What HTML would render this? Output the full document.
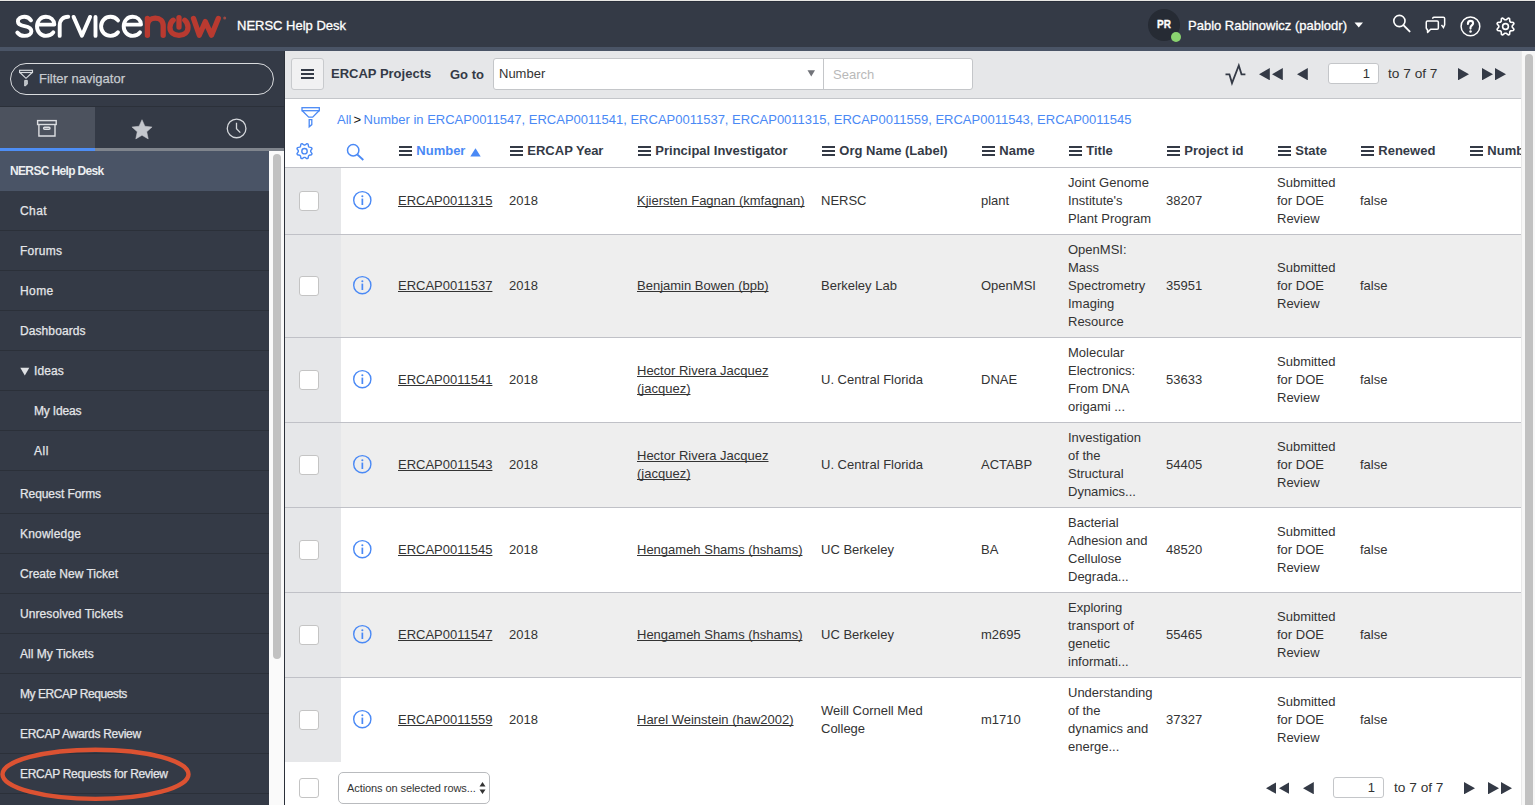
<!DOCTYPE html>
<html><head><meta charset="utf-8"><style>
*{box-sizing:border-box;margin:0;padding:0}
html,body{width:1535px;height:805px;overflow:hidden;background:#343a46;font-family:"Liberation Sans",sans-serif;}
.a{position:absolute}
.t{position:absolute;white-space:nowrap}
.navrow{position:absolute;left:0;width:269px;border-bottom:1px solid #2b3039;color:#e4e6e9;font-size:12px}
.navrow span{position:absolute;white-space:nowrap;line-height:14px;-webkit-text-stroke:0.25px #e4e6e9}
.row{position:absolute;left:0;width:1236px}
.cell{position:absolute;top:0;height:100%;display:flex;align-items:center;font-size:13px;line-height:18px;color:#333333;white-space:nowrap}
.u{text-decoration:underline;text-decoration-skip-ink:none}
.ck{position:absolute;width:20px;height:20px;border:1px solid #c4c4c4;border-radius:3px;background:#fff}
.hd{position:absolute;top:0;height:100%;display:flex;align-items:center;font-size:13px;font-weight:bold;color:#343a46;white-space:nowrap}
.hd i{display:inline-block;flex:none;width:13px;height:10px;margin-right:4.3px;position:relative;top:0.5px;background:linear-gradient(#343a46 0 2px,transparent 2px 4px,#343a46 4px 6px,transparent 6px 8px,#343a46 8px 10px)}
</style></head><body>
<div class="a" style="left:0;top:0;width:1535px;height:1px;background:#e8e7e4"></div>
<div class="a" style="left:0;top:1px;width:1535px;height:46px;background:#343a46"></div>
<div class="a" style="left:0;top:1px;width:1535px;height:1px;background:#292e3a"></div>
<div class="a" style="left:0;top:47px;width:1535px;height:4px;background:#4a5466"></div>
<svg class="a" style="left:0;top:0" width="232" height="47" viewBox="0 0 232 47">
<g fill="none" stroke="#fff" stroke-width="3.9" stroke-linecap="round" stroke-linejoin="round">
<path d="M31 20.3 C29.4 18 27.2 16.8 24.4 16.8 C20.6 16.8 17.9 18.7 17.9 21.5 C17.9 24.6 21 25.5 24.5 26.2 C28.4 27 31.4 28.3 31.4 31.3 C31.4 34.2 28.5 35.9 24.5 35.9 C21.4 35.9 18.9 34.7 17.3 32.5"/>
<path d="M37.1 24.6 H54.3 C54.1 19.8 50.6 16.8 45.9 16.8 C40.9 16.8 37 20.8 37 26.3 C37 31.8 40.9 35.9 45.9 35.9 C49.2 35.9 51.6 34.6 53.3 32.3"/>
<path d="M59.7 35.9 V25.5 C59.7 20 63 16.8 68.2 16.8"/>
<path d="M73.6 16.9 L81.9 35.8 L90.1 16.9"/>
<path d="M95.5 16.9 V35.9"/>
<path d="M118 20.4 C116.2 18.1 113.6 16.8 110.5 16.8 C105.1 16.8 101.1 20.9 101.1 26.3 C101.1 31.8 105.1 35.9 110.5 35.9 C113.6 35.9 116.2 34.6 118 32.3"/>
<path d="M123.8 24.6 H141 C140.8 19.8 137.3 16.8 132.6 16.8 C127.6 16.8 123.7 20.8 123.7 26.3 C123.7 31.8 127.6 35.9 132.6 35.9 C135.9 35.9 138.3 34.6 140 32.3"/>
</g>
<g fill="none" stroke="#b93a30" stroke-width="5.3" stroke-linecap="round" stroke-linejoin="round">
<path d="M147.4 35.3 V18.3 M147.4 26 C147.4 21 150.6 18.1 155.3 18.1 C160 18.1 163.2 21 163.2 26 V35.3"/>
<path d="M173.2 20.2 C170.9 22 169.9 24.5 169.9 27.3 C169.9 32.3 173.9 35.4 179 35.4 C184.1 35.4 188 32.3 188 27.3 C188 24.5 187 22 184.8 20.2"/>
<path d="M179 17.6 V27"/>
<path d="M193.5 18.4 L199.3 35.2 L205.3 21.6 L211.5 35.2 L218.3 18.4"/>
</g>
<circle cx="224.7" cy="17.9" r="1.5" fill="#9a4a44"/>
</svg>
<div class="t" style="left:237px;top:18px;font-size:13px;line-height:16px;color:#fff;-webkit-text-stroke:0.3px #fff">NERSC Help Desk</div>
<div class="a" style="left:1148px;top:9px;width:32px;height:32px;border-radius:50%;background:#262b34"></div>
<div class="t" style="left:1148px;top:19px;width:32px;text-align:center;font-size:10px;font-weight:bold;color:#fff;line-height:12px;-webkit-text-stroke:0.3px #fff">PR</div>
<div class="a" style="left:1171px;top:32px;width:10px;height:10px;border-radius:50%;background:#8ad36f"></div>
<div class="t" style="left:1188px;top:18px;font-size:13px;line-height:16px;color:#fff;-webkit-text-stroke:0.3px #fff">Pablo Rabinowicz (pablodr)</div>
<svg class="a" style="left:1354px;top:22px" width="10" height="6"><path d="M0.5 0.5 H9 L4.75 5.5Z" fill="#fff"/></svg>
<svg class="a" style="left:1385px;top:8px" width="30" height="30" viewBox="0 0 30 30" fill="none" stroke="#fff" stroke-width="1.6">
<circle cx="14.4" cy="13" r="5.6"/><path d="M18.4 17.2 L24.6 23.4" stroke-width="1.9" stroke-linecap="round"/></svg>
<svg class="a" style="left:1420px;top:10px" width="65" height="30" viewBox="0 0 65 30" fill="none" stroke="#fff" stroke-width="1.5">
<path d="M12.7 8.8 V8.4 Q12.7 7.15 13.9 7.15 H23.4 Q24.65 7.15 24.65 8.4 V14.9 L23.4 17.6 L21.5 14.9"/>
<path d="M7.5 10.95 H17.1 Q18.35 10.95 18.35 12.2 V17.9 Q18.35 19.15 17.1 19.15 H10.6 L7.6 22.4 L7.4 19.15 Q6.25 19.15 6.25 17.9 V12.2 Q6.25 10.95 7.5 10.95Z" stroke-linejoin="round"/>
<circle cx="50.45" cy="16.45" r="9.35"/>
<path d="M47.9 13.9 C47.9 11.8 49 10.9 50.5 10.9 C52.1 10.9 53.1 11.9 53.1 13.3 C53.1 15.2 50.5 15.6 50.5 17.6 V18.6" stroke-width="2.1" stroke-linecap="round"/>
<circle cx="50.5" cy="21.4" r="1.25" fill="#fff" stroke="none"/>
</svg>
<svg class="a" style="left:1493px;top:14px" width="26" height="26" viewBox="0 0 26 26"><path d="M13.03 5.82 L15.25 4.04 L16.54 4.57 L16.85 7.41 L17.59 8.15 L20.43 8.46 L20.96 9.75 L19.18 11.97 L19.18 13.03 L20.96 15.25 L20.43 16.54 L17.59 16.85 L16.85 17.59 L16.54 20.43 L15.25 20.96 L13.03 19.18 L11.97 19.18 L9.75 20.96 L8.46 20.43 L8.15 17.59 L7.41 16.85 L4.57 16.54 L4.04 15.25 L5.82 13.03 L5.82 11.97 L4.04 9.75 L4.57 8.46 L7.41 8.15 L8.15 7.41 L8.46 4.57 L9.75 4.04 L11.97 5.82Z" fill="none" stroke="#fff" stroke-width="1.6" stroke-linejoin="round"/><circle cx="12.5" cy="12.5" r="2.9" fill="none" stroke="#fff" stroke-width="1.6"/></svg>
<div class="a" style="left:10px;top:63px;width:264px;height:32px;border:1px solid #d9dbde;border-radius:16px"></div>
<svg class="a" style="left:17px;top:69px" width="18" height="18" viewBox="0 0 18 18" fill="none" stroke="#d8dbdf" stroke-width="1.15">
<rect x="2.6" y="1.3" width="12.9" height="2.2"/><path d="M2.9 3.5 L9 9.3 L15.2 3.5"/><path d="M7.7 11.4 H10.3 V15.2 L8.1 17 H7.7Z" fill="#b9bdc3" stroke-width="0.9"/></svg>
<div class="t" style="left:39px;top:71px;font-size:13px;line-height:16px;color:#c6cacf;-webkit-text-stroke:0.25px #c6cacf">Filter navigator</div>
<div class="a" style="left:0;top:106px;width:285px;height:1px;background:#2b3039"></div>
<div class="a" style="left:0;top:107px;width:95px;height:41px;background:#4c525e"></div>
<div class="a" style="left:0;top:148px;width:95px;height:3px;background:#4e8ef5"></div>
<div class="a" style="left:95px;top:148px;width:190px;height:3px;background:#80858d"></div>
<svg class="a" style="left:36px;top:119px" width="22" height="20" viewBox="0 0 22 20" fill="none" stroke="#dcdee2" stroke-width="1.4">
<rect x="1.6" y="1.6" width="18.6" height="3.9"/><path d="M2.9 5.5 V17 H19 V5.5"/><rect x="7.6" y="8.3" width="6.4" height="1.9" rx="0.95"/></svg>
<svg class="a" style="left:131px;top:118.5px" width="22" height="22" viewBox="0 0 22 22">
<path d="M11.00 0.70 L13.94 7.25 L21.08 8.02 L15.76 12.85 L17.23 19.88 L11.00 16.30 L4.77 19.88 L6.24 12.85 L0.92 8.02 L8.06 7.25Z" fill="#c4c7cd" stroke="#c4c7cd" stroke-width="0.5" stroke-linejoin="round"/></svg>
<svg class="a" style="left:225px;top:117px" width="23" height="23" viewBox="0 0 23 23" fill="none" stroke="#d5d8dc" stroke-width="1.3">
<circle cx="11.6" cy="11.4" r="9.35"/><path d="M11.5 5.8 V11.7 L15.3 15.6"/></svg>
<div class="a" style="left:269px;top:151px;width:15px;height:654px;background:#fafafa"></div>
<div class="a" style="left:284px;top:51px;width:1px;height:754px;background:#2b3039"></div>
<div class="a" style="left:273px;top:154px;width:8px;height:505px;border-radius:4px;background:#c1c1c1"></div>
<div class="a" style="left:0;top:151px;width:269px;height:40px;background:#4a5466"></div>
<div class="t" style="left:10px;top:164px;font-size:12px;font-weight:bold;line-height:14px;color:#eceef1;letter-spacing:-0.65px">NERSC Help Desk</div>
<div class="navrow" style="top:191px;height:40px"><span style="left:20px;top:13px;letter-spacing:0.4px">Chat</span></div>
<div class="navrow" style="top:231px;height:40px"><span style="left:20px;top:13px;letter-spacing:0.26px">Forums</span></div>
<div class="navrow" style="top:271px;height:40px"><span style="left:20px;top:13px;letter-spacing:0.4px">Home</span></div>
<div class="navrow" style="top:311px;height:40px"><span style="left:20px;top:13px;letter-spacing:0.09px">Dashboards</span></div>
<div class="navrow" style="top:351px;height:40px"><span style="left:34px;top:13px;letter-spacing:0.08px">Ideas</span></div>
<svg class="a" style="left:20px;top:367px" width="10" height="9"><path d="M0.3 0.8 H9.3 L4.8 8.4Z" fill="#dfe1e4"/></svg>
<div class="navrow" style="top:391px;height:40px"><span style="left:34px;top:13px;letter-spacing:-0.16px">My Ideas</span></div>
<div class="navrow" style="top:431px;height:40px"><span style="left:34px;top:13px;letter-spacing:0.5px">All</span></div>
<div class="navrow" style="top:471px;height:43px"><span style="left:20px;top:16px;letter-spacing:-0.08px">Request Forms</span></div>
<div class="navrow" style="top:514px;height:40px"><span style="left:20px;top:13px;letter-spacing:0.2px">Knowledge</span></div>
<div class="navrow" style="top:554px;height:40px"><span style="left:20px;top:13px;letter-spacing:0.0px">Create New Ticket</span></div>
<div class="navrow" style="top:594px;height:40px"><span style="left:20px;top:13px;letter-spacing:0.09px">Unresolved Tickets</span></div>
<div class="navrow" style="top:634px;height:40px"><span style="left:20px;top:13px;letter-spacing:0.03px">All My Tickets</span></div>
<div class="navrow" style="top:674px;height:40px"><span style="left:20px;top:13px;letter-spacing:-0.45px">My ERCAP Requests</span></div>
<div class="navrow" style="top:714px;height:40px"><span style="left:20px;top:13px;letter-spacing:-0.29px">ERCAP Awards Review</span></div>
<div class="navrow" style="top:754px;height:40px"><span style="left:20px;top:13px;letter-spacing:-0.3px">ERCAP Requests for Review</span></div>
<div class="navrow" style="top:794px;height:40px"><span style="left:20px;top:13px;letter-spacing:0px"></span></div>
<svg class="a" style="left:0;top:745px" width="200" height="60" viewBox="0 0 200 60"><ellipse cx="95.5" cy="29.3" rx="93" ry="24.6" fill="none" stroke="#dc5232" stroke-width="4.4"/></svg>
<div class="a" style="left:285px;top:51px;width:1236px;height:754px;background:#fff;overflow:hidden"><div class="a" style="left:0;top:0;width:1236px;height:48px;background:#e6e7e9;border-bottom:1px solid #c4c6ca"></div>
<div class="a" style="left:0;top:-1px;width:1236px;height:1px;background:#3b4250"></div>
<div class="a" style="left:6px;top:7px;width:33px;height:32px;background:#f1f1f2;border:1px solid #c8cacd;border-radius:3px"></div>
<div class="a" style="left:16px;top:18px;width:13px;height:10px;background:linear-gradient(#343a46 0 2px,transparent 2px 4px,#343a46 4px 6px,transparent 6px 8px,#343a46 8px 10px)"></div>
<div class="t" style="left:46px;top:15px;font-size:13px;font-weight:bold;line-height:16px;color:#343a46">ERCAP Projects</div>
<div class="t" style="left:165px;top:16px;font-size:13px;font-weight:bold;line-height:16px;color:#343a46">Go to</div>
<div class="a" style="left:208px;top:7px;width:480px;height:32px;background:#fff;border:1px solid #c4c6c9;border-radius:3px"></div>
<div class="a" style="left:538px;top:8px;width:1px;height:30px;background:#c4c6c9"></div>
<div class="t" style="left:214px;top:15px;font-size:13px;line-height:16px;color:#333333">Number</div>
<svg class="a" style="left:522px;top:19px" width="9" height="7"><path d="M0.5 0.3 H8 L4.25 6.5Z" fill="#717379"/></svg>
<div class="t" style="left:548px;top:16px;font-size:13px;line-height:16px;color:#b9b9b9">Search</div>
<svg class="a" style="left:935px;top:10px" width="30" height="26" viewBox="0 0 30 26" fill="none" stroke="#343a46" stroke-width="1.8" stroke-linejoin="miter"><path d="M5.5 13.3 H9.4 L12 22.1 L18.8 4.5 L21.5 13.3 H25.4"/></svg>
<svg class="a" style="left:974.4000000000001px;top:16.8px" width="10.8" height="12.3"><path d="M0 6.15 L10.8 0 V12.3Z" fill="#343a46"/></svg>
<svg class="a" style="left:987.4000000000001px;top:16.8px" width="10.8" height="12.3"><path d="M0 6.15 L10.8 0 V12.3Z" fill="#343a46"/></svg>
<svg class="a" style="left:1011.8px;top:16.8px" width="10.8" height="12.3"><path d="M0 6.15 L10.8 0 V12.3Z" fill="#343a46"/></svg>
<svg class="a" style="left:1172.8px;top:16.8px" width="11" height="12.3"><path d="M0 0 L11 6.15 L0 12.3Z" fill="#343a46"/></svg>
<svg class="a" style="left:1197.2px;top:16.8px" width="11" height="12.3"><path d="M0 0 L11 6.15 L0 12.3Z" fill="#343a46"/></svg>
<svg class="a" style="left:1210.2px;top:16.8px" width="11" height="12.3"><path d="M0 0 L11 6.15 L0 12.3Z" fill="#343a46"/></svg>
<div class="a" style="left:1042.5px;top:12px;width:51.5px;height:21px;background:#fff;border:1px solid #c4c6c9;border-radius:3px"></div>
<div class="t" style="left:1043px;top:15px;width:42px;text-align:right;font-size:13px;line-height:16px;color:#333333">1</div>
<div class="t" style="left:1103px;top:15px;font-size:13.7px;line-height:16px;color:#333333">to 7 of 7</div>
<svg class="a" style="left:15px;top:55px" width="22" height="24" viewBox="0 0 22 24" fill="none" stroke="#4a89f5" stroke-width="1.3">
<rect x="2" y="1.7" width="17.3" height="3"/><path d="M2.3 4.7 L8.7 11.2 H12.7 L19 4.7"/><path d="M9.2 13.6 V20.8 L11.8 18.6 V13.6Z"/></svg>
<div class="t" style="left:52px;top:61px;font-size:13px;line-height:16px;color:#4a89f5">All<span style="color:#111;margin:0 2.5px 0 2px">&gt;</span>Number in ERCAP0011547, ERCAP0011541, ERCAP0011537, ERCAP0011315, ERCAP0011559, ERCAP0011543, ERCAP0011545</div>
<svg class="a" style="left:9px;top:90px" width="21" height="21" viewBox="0 0 21 21"><path d="M10.99 4.02 L12.94 2.69 L14.09 3.16 L14.53 5.49 L15.21 6.17 L17.54 6.61 L18.01 7.76 L16.68 9.71 L16.68 10.69 L18.01 12.64 L17.54 13.79 L15.21 14.23 L14.53 14.91 L14.09 17.24 L12.94 17.71 L10.99 16.38 L10.01 16.38 L8.06 17.71 L6.91 17.24 L6.47 14.91 L5.79 14.23 L3.46 13.79 L2.99 12.64 L4.32 10.69 L4.32 9.71 L2.99 7.76 L3.46 6.61 L5.79 6.17 L6.47 5.49 L6.91 3.16 L8.06 2.69 L10.01 4.02Z" fill="none" stroke="#4a89f5" stroke-width="1.4" stroke-linejoin="round"/><circle cx="10.5" cy="10.2" r="2.7" fill="none" stroke="#4a89f5" stroke-width="1.4"/></svg>
<svg class="a" style="left:60px;top:92px" width="22" height="22" viewBox="0 0 22 22" fill="none" stroke="#4a89f5" stroke-width="1.5"><circle cx="8.2" cy="7.3" r="5.7"/><path d="M12.3 11.5 L18.3 17" stroke-width="1.8"/></svg>
<div class="hd" style="left:114px;top:83px;height:33px;color:#4a89f5"><i></i>Number<svg style="margin-left:5px;position:relative;top:1.5px" width="11" height="9"><path d="M0.3 8.6 L5.5 0.3 L10.7 8.6Z" fill="#4a89f5"/></svg></div>
<div class="hd" style="left:225px;top:83px;height:33px"><i></i>ERCAP Year</div>
<div class="hd" style="left:353px;top:83px;height:33px"><i></i>Principal Investigator</div>
<div class="hd" style="left:537px;top:83px;height:33px"><i></i>Org Name (Label)</div>
<div class="hd" style="left:697px;top:83px;height:33px"><i></i>Name</div>
<div class="hd" style="left:784px;top:83px;height:33px"><i></i>Title</div>
<div class="hd" style="left:882px;top:83px;height:33px"><i></i>Project id</div>
<div class="hd" style="left:993px;top:83px;height:33px"><i></i>State</div>
<div class="hd" style="left:1076px;top:83px;height:33px"><i></i>Renewed</div>
<div class="hd" style="left:1185px;top:83px;height:33px"><i></i>Number</div>
<div class="a" style="left:0;top:116px;width:1236px;height:1px;background:#c0c1c7"></div>
<div class="row" style="top:117px;height:66px;background:#fff">
<div class="a" style="left:0;top:0;width:56px;height:66px;background:#e6e7e9"></div>
<div class="ck" style="left:14px;top:23px"></div>
<svg class="a" style="left:67px;top:22px" width="20" height="20" viewBox="0 0 20 20"><circle cx="10.3" cy="10.2" r="8.6" fill="none" stroke="#4a89f5" stroke-width="1.4"/><rect x="9.5" y="8.6" width="1.7" height="6.4" fill="#4a89f5"/><circle cx="10.35" cy="6.2" r="1.05" fill="#4a89f5"/></svg>
<div class="cell u" style="left:113px"><div>ERCAP0011315</div></div>
<div class="cell " style="left:224px"><div>2018</div></div>
<div class="cell u" style="left:352px"><div>Kjiersten Fagnan (kmfagnan)</div></div>
<div class="cell " style="left:536px"><div>NERSC</div></div>
<div class="cell " style="left:696px"><div>plant</div></div>
<div class="cell " style="left:783px"><div>Joint Genome<br>Institute's<br>Plant Program</div></div>
<div class="cell " style="left:881px"><div>38207</div></div>
<div class="cell " style="left:992px"><div>Submitted<br>for DOE<br>Review</div></div>
<div class="cell " style="left:1075px"><div>false</div></div>
</div>
<div class="a" style="left:0;top:183px;width:1236px;height:1px;background:#c0c1c7"></div>
<div class="row" style="top:184px;height:102px;background:#eeeeee">
<div class="a" style="left:0;top:0;width:56px;height:102px;background:#e6e7e9"></div>
<div class="ck" style="left:14px;top:41px"></div>
<svg class="a" style="left:67px;top:40px" width="20" height="20" viewBox="0 0 20 20"><circle cx="10.3" cy="10.2" r="8.6" fill="none" stroke="#4a89f5" stroke-width="1.4"/><rect x="9.5" y="8.6" width="1.7" height="6.4" fill="#4a89f5"/><circle cx="10.35" cy="6.2" r="1.05" fill="#4a89f5"/></svg>
<div class="cell u" style="left:113px"><div>ERCAP0011537</div></div>
<div class="cell " style="left:224px"><div>2018</div></div>
<div class="cell u" style="left:352px"><div>Benjamin Bowen (bpb)</div></div>
<div class="cell " style="left:536px"><div>Berkeley Lab</div></div>
<div class="cell " style="left:696px"><div>OpenMSI</div></div>
<div class="cell " style="left:783px"><div>OpenMSI:<br>Mass<br>Spectrometry<br>Imaging<br>Resource</div></div>
<div class="cell " style="left:881px"><div>35951</div></div>
<div class="cell " style="left:992px"><div>Submitted<br>for DOE<br>Review</div></div>
<div class="cell " style="left:1075px"><div>false</div></div>
</div>
<div class="a" style="left:0;top:286px;width:1236px;height:1px;background:#c0c1c7"></div>
<div class="row" style="top:287px;height:84px;background:#fff">
<div class="a" style="left:0;top:0;width:56px;height:84px;background:#e6e7e9"></div>
<div class="ck" style="left:14px;top:32px"></div>
<svg class="a" style="left:67px;top:31px" width="20" height="20" viewBox="0 0 20 20"><circle cx="10.3" cy="10.2" r="8.6" fill="none" stroke="#4a89f5" stroke-width="1.4"/><rect x="9.5" y="8.6" width="1.7" height="6.4" fill="#4a89f5"/><circle cx="10.35" cy="6.2" r="1.05" fill="#4a89f5"/></svg>
<div class="cell u" style="left:113px"><div>ERCAP0011541</div></div>
<div class="cell " style="left:224px"><div>2018</div></div>
<div class="cell u" style="left:352px"><div>Hector Rivera Jacquez<br>(jacquez)</div></div>
<div class="cell " style="left:536px"><div>U. Central Florida</div></div>
<div class="cell " style="left:696px"><div>DNAE</div></div>
<div class="cell " style="left:783px"><div>Molecular<br>Electronics:<br>From DNA<br>origami ...</div></div>
<div class="cell " style="left:881px"><div>53633</div></div>
<div class="cell " style="left:992px"><div>Submitted<br>for DOE<br>Review</div></div>
<div class="cell " style="left:1075px"><div>false</div></div>
</div>
<div class="a" style="left:0;top:371px;width:1236px;height:1px;background:#c0c1c7"></div>
<div class="row" style="top:372px;height:84px;background:#eeeeee">
<div class="a" style="left:0;top:0;width:56px;height:84px;background:#e6e7e9"></div>
<div class="ck" style="left:14px;top:32px"></div>
<svg class="a" style="left:67px;top:31px" width="20" height="20" viewBox="0 0 20 20"><circle cx="10.3" cy="10.2" r="8.6" fill="none" stroke="#4a89f5" stroke-width="1.4"/><rect x="9.5" y="8.6" width="1.7" height="6.4" fill="#4a89f5"/><circle cx="10.35" cy="6.2" r="1.05" fill="#4a89f5"/></svg>
<div class="cell u" style="left:113px"><div>ERCAP0011543</div></div>
<div class="cell " style="left:224px"><div>2018</div></div>
<div class="cell u" style="left:352px"><div>Hector Rivera Jacquez<br>(jacquez)</div></div>
<div class="cell " style="left:536px"><div>U. Central Florida</div></div>
<div class="cell " style="left:696px"><div>ACTABP</div></div>
<div class="cell " style="left:783px"><div>Investigation<br>of the<br>Structural<br>Dynamics...</div></div>
<div class="cell " style="left:881px"><div>54405</div></div>
<div class="cell " style="left:992px"><div>Submitted<br>for DOE<br>Review</div></div>
<div class="cell " style="left:1075px"><div>false</div></div>
</div>
<div class="a" style="left:0;top:456px;width:1236px;height:1px;background:#c0c1c7"></div>
<div class="row" style="top:457px;height:84px;background:#fff">
<div class="a" style="left:0;top:0;width:56px;height:84px;background:#e6e7e9"></div>
<div class="ck" style="left:14px;top:32px"></div>
<svg class="a" style="left:67px;top:31px" width="20" height="20" viewBox="0 0 20 20"><circle cx="10.3" cy="10.2" r="8.6" fill="none" stroke="#4a89f5" stroke-width="1.4"/><rect x="9.5" y="8.6" width="1.7" height="6.4" fill="#4a89f5"/><circle cx="10.35" cy="6.2" r="1.05" fill="#4a89f5"/></svg>
<div class="cell u" style="left:113px"><div>ERCAP0011545</div></div>
<div class="cell " style="left:224px"><div>2018</div></div>
<div class="cell u" style="left:352px"><div>Hengameh Shams (hshams)</div></div>
<div class="cell " style="left:536px"><div>UC Berkeley</div></div>
<div class="cell " style="left:696px"><div>BA</div></div>
<div class="cell " style="left:783px"><div>Bacterial<br>Adhesion and<br>Cellulose<br>Degrada...</div></div>
<div class="cell " style="left:881px"><div>48520</div></div>
<div class="cell " style="left:992px"><div>Submitted<br>for DOE<br>Review</div></div>
<div class="cell " style="left:1075px"><div>false</div></div>
</div>
<div class="a" style="left:0;top:541px;width:1236px;height:1px;background:#c0c1c7"></div>
<div class="row" style="top:542px;height:84px;background:#eeeeee">
<div class="a" style="left:0;top:0;width:56px;height:84px;background:#e6e7e9"></div>
<div class="ck" style="left:14px;top:32px"></div>
<svg class="a" style="left:67px;top:31px" width="20" height="20" viewBox="0 0 20 20"><circle cx="10.3" cy="10.2" r="8.6" fill="none" stroke="#4a89f5" stroke-width="1.4"/><rect x="9.5" y="8.6" width="1.7" height="6.4" fill="#4a89f5"/><circle cx="10.35" cy="6.2" r="1.05" fill="#4a89f5"/></svg>
<div class="cell u" style="left:113px"><div>ERCAP0011547</div></div>
<div class="cell " style="left:224px"><div>2018</div></div>
<div class="cell u" style="left:352px"><div>Hengameh Shams (hshams)</div></div>
<div class="cell " style="left:536px"><div>UC Berkeley</div></div>
<div class="cell " style="left:696px"><div>m2695</div></div>
<div class="cell " style="left:783px"><div>Exploring<br>transport of<br>genetic<br>informati...</div></div>
<div class="cell " style="left:881px"><div>55465</div></div>
<div class="cell " style="left:992px"><div>Submitted<br>for DOE<br>Review</div></div>
<div class="cell " style="left:1075px"><div>false</div></div>
</div>
<div class="a" style="left:0;top:626px;width:1236px;height:1px;background:#c0c1c7"></div>
<div class="row" style="top:627px;height:84px;background:#fff">
<div class="a" style="left:0;top:0;width:56px;height:84px;background:#e6e7e9"></div>
<div class="ck" style="left:14px;top:32px"></div>
<svg class="a" style="left:67px;top:31px" width="20" height="20" viewBox="0 0 20 20"><circle cx="10.3" cy="10.2" r="8.6" fill="none" stroke="#4a89f5" stroke-width="1.4"/><rect x="9.5" y="8.6" width="1.7" height="6.4" fill="#4a89f5"/><circle cx="10.35" cy="6.2" r="1.05" fill="#4a89f5"/></svg>
<div class="cell u" style="left:113px"><div>ERCAP0011559</div></div>
<div class="cell " style="left:224px"><div>2018</div></div>
<div class="cell u" style="left:352px"><div>Harel Weinstein (haw2002)</div></div>
<div class="cell " style="left:536px"><div>Weill Cornell Med<br>College</div></div>
<div class="cell " style="left:696px"><div>m1710</div></div>
<div class="cell " style="left:783px"><div>Understanding<br>of the<br>dynamics and<br>energe...</div></div>
<div class="cell " style="left:881px"><div>37327</div></div>
<div class="cell " style="left:992px"><div>Submitted<br>for DOE<br>Review</div></div>
<div class="cell " style="left:1075px"><div>false</div></div>
</div>
<div class="ck" style="left:14px;top:727px"></div>
<div class="a" style="left:53px;top:721px;width:152px;height:32px;border:1px solid #b9bbbe;border-radius:5px;background:#fff"></div>
<div class="t" style="left:62px;top:731px;font-size:11px;line-height:13px;letter-spacing:-0.08px;color:#333333">Actions on selected rows...</div>
<svg class="a" style="left:194px;top:730px" width="7" height="14"><path d="M0.5 5.5 L3.5 1 L6.5 5.5Z M0.5 8.5 L3.5 13 L6.5 8.5Z" fill="#333"/></svg>
<svg class="a" style="left:980.5px;top:730.9px" width="10.8" height="12.3"><path d="M0 6.15 L10.8 0 V12.3Z" fill="#343a46"/></svg>
<svg class="a" style="left:993.5px;top:730.9px" width="10.8" height="12.3"><path d="M0 6.15 L10.8 0 V12.3Z" fill="#343a46"/></svg>
<svg class="a" style="left:1018px;top:730.9px" width="10.8" height="12.3"><path d="M0 6.15 L10.8 0 V12.3Z" fill="#343a46"/></svg>
<svg class="a" style="left:1178.9px;top:730.9px" width="11" height="12.3"><path d="M0 0 L11 6.15 L0 12.3Z" fill="#343a46"/></svg>
<svg class="a" style="left:1203.3px;top:730.9px" width="11" height="12.3"><path d="M0 0 L11 6.15 L0 12.3Z" fill="#343a46"/></svg>
<svg class="a" style="left:1216.3px;top:730.9px" width="11" height="12.3"><path d="M0 0 L11 6.15 L0 12.3Z" fill="#343a46"/></svg>
<div class="a" style="left:1048px;top:726px;width:51px;height:21px;background:#fff;border:1px solid #c4c6c9;border-radius:3px"></div>
<div class="t" style="left:1048px;top:729px;width:42px;text-align:right;font-size:13px;line-height:16px;color:#333333">1</div>
<div class="t" style="left:1109px;top:729px;font-size:13.7px;line-height:16px;color:#333333">to 7 of 7</div></div>
<div class="a" style="left:1521px;top:51px;width:14px;height:754px;background:#f7f7f7;border-left:1px solid #e9e9e9"></div>
<div class="a" style="left:1525px;top:54px;width:8px;height:760px;border-radius:4px;background:#c1c1c1"></div>
</body></html>
